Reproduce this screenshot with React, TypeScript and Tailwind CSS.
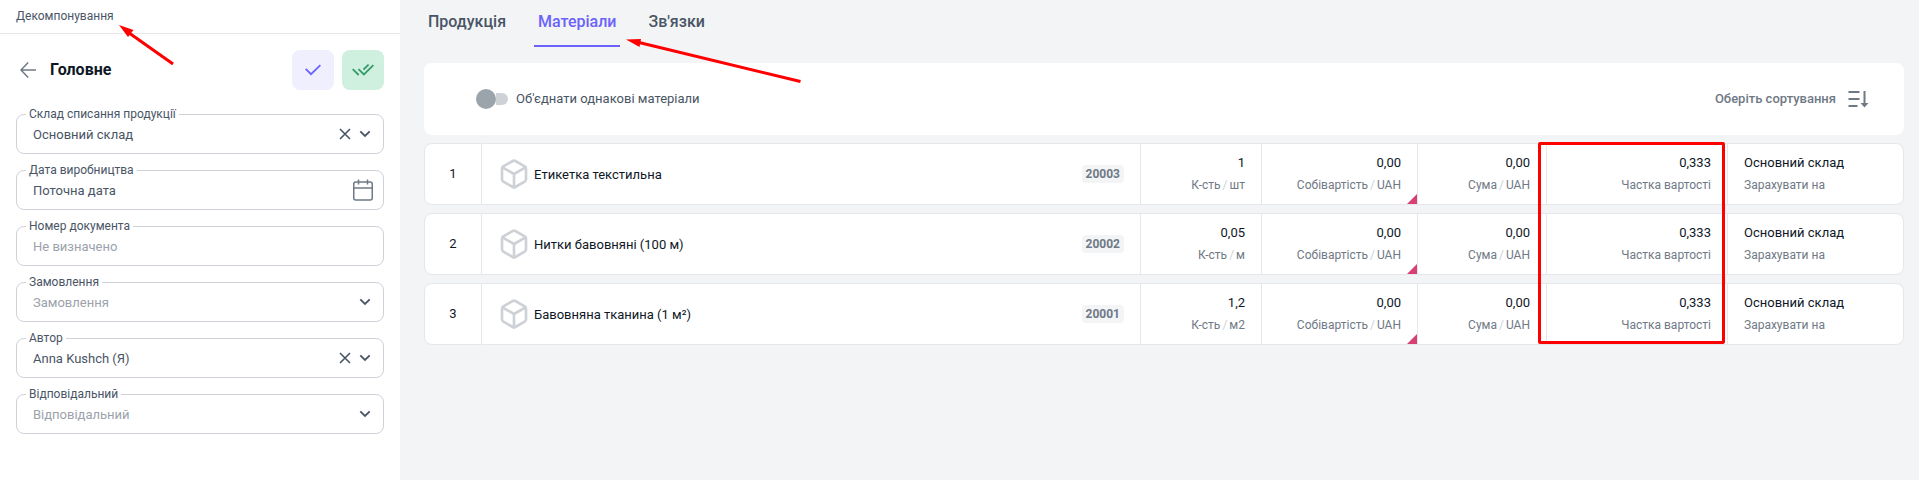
import type { ReactNode } from "react";
import { Box } from "lucide-react";
import clsx from "clsx";

interface Field {
  id: string;
  label: string;
  value?: string;
  placeholder?: string;
  kind: "select" | "date" | "text";
}

const fields: Field[] = [
  { id: "warehouse", label: "Склад списання продукції", value: "Основний склад", kind: "select" },
  { id: "date", label: "Дата виробництва", value: "Поточна дата", kind: "date" },
  { id: "number", label: "Номер документа", placeholder: "Не визначено", kind: "text" },
  { id: "order", label: "Замовлення", placeholder: "Замовлення", kind: "select" },
  { id: "author", label: "Автор", value: "Anna Kushch (Я)", kind: "select" },
  { id: "manager", label: "Відповідальний", placeholder: "Відповідальний", kind: "select" },
];

const materials = [
  { name: "Етикетка текстильна", code: "20003", qty: "1", unit: "шт" },
  { name: "Нитки бавовняні (100 м)", code: "20002", qty: "0,05", unit: "м" },
  { name: "Бавовняна тканина (1 м²)", code: "20001", qty: "1,2", unit: "м2" },
];

const tabs = ["Продукція", "Матеріали", "Зв'язки"];

function ClearIcon() {
  return (
    <svg width="12" height="12" viewBox="0 0 12 12" fill="none" stroke="currentColor" strokeWidth="1.6">
      <path d="M1 1l10 10M11 1L1 11" />
    </svg>
  );
}

function ChevronIcon() {
  return (
    <svg width="12" height="8" viewBox="0 0 12 8" fill="none" stroke="currentColor" strokeWidth="1.8">
      <path d="M1.3 1.3L6 6l4.7-4.7" />
    </svg>
  );
}

function CalendarIcon() {
  return (
    <svg width="20" height="22" viewBox="0 0 20 22" fill="none" stroke="currentColor" strokeWidth="1.5">
      <rect x="0.75" y="3" width="18.5" height="18" rx="2" />
      <path d="M1 9h18M5.5 0.5v5M14.5 0.5v5" />
    </svg>
  );
}

function FormField({ id, label, value, placeholder, kind }: Field) {
  return (
    <div className="relative flex h-10 items-center rounded-lg border border-[#ced1d8] text-[#495565]">
      <label htmlFor={id} className="absolute -top-[9px] left-[9px] bg-white px-[3px] text-xs leading-4">
        {label}
      </label>
      {kind === "select" ? (
        <select
          id={id}
          defaultValue={value ?? ""}
          className={clsx(
            "h-full w-full appearance-none rounded-lg bg-transparent px-4 pt-0.5 text-[13px] outline-none",
            !value && "text-[#9ba2ab]"
          )}
        >
          <option value={value ?? ""}>{value ?? placeholder}</option>
        </select>
      ) : (
        <input
          id={id}
          type="text"
          defaultValue={value}
          placeholder={placeholder}
          className="h-full w-full rounded-lg bg-transparent px-4 text-[13px] outline-none placeholder:text-[#9ba2ab]"
        />
      )}
      <div className="pointer-events-none absolute inset-y-0 right-3 flex items-center gap-2">
        {kind === "select" && value && (
          <button type="button" aria-label="Очистити" className="pointer-events-auto">
            <ClearIcon />
          </button>
        )}
        {kind === "select" && <ChevronIcon />}
      </div>
      {kind === "date" && (
        <button type="button" aria-label="Календар" className="absolute right-[10px] text-[#6f7985]">
          <CalendarIcon />
        </button>
      )}
    </div>
  );
}

function Sidebar() {
  return (
    <aside className="relative w-[400px] shrink-0 bg-white">
      <div className="flex h-[34px] items-center border-b border-[#e5e7ea] px-4 pb-px text-xs text-[#495565]">
        Декомпонування
      </div>
      <div className="flex items-center px-4 pt-4">
        <button type="button" aria-label="Назад" className="mx-1 text-[#6f7985]">
          <svg width="16" height="16" viewBox="0 0 16 16" fill="none" stroke="currentColor" strokeWidth="1.5">
            <path d="M8.2 0.6L1 8l7.2 7.4M1 8h15" />
          </svg>
        </button>
        <h1 className="ml-[10px] flex-1 text-base font-bold text-[#0e1726]">Головне</h1>
        <div className="flex gap-2">
          <button
            type="button"
            aria-label="Зберегти"
            className="flex h-10 w-[42px] items-center justify-center rounded-lg bg-[#f0effe] text-[#6b62fb]"
          >
            <svg width="16" height="12" viewBox="0 0 16 12" fill="none" stroke="currentColor" strokeWidth="1.8">
              <path d="M0.7 4.8L6 10.2l9.4-9.1" />
            </svg>
          </button>
          <button
            type="button"
            aria-label="Провести"
            className="flex h-10 w-[42px] items-center justify-center rounded-lg bg-[#cff0df] text-[#35996a]"
          >
            <svg width="22" height="12" viewBox="0 0 22 12" fill="none" stroke="currentColor" strokeWidth="1.8">
              <path d="M0.7 5.2l6 5.8M6.5 5.2l5.4 5.2 9.5-9.3M11.4 5.6L16.6 0.6" />
            </svg>
          </button>
        </div>
      </div>
      <form className="flex flex-col gap-4 px-4 pt-6">
        {fields.map((field) => (
          <FormField key={field.id} {...field} />
        ))}
      </form>
      <svg className="absolute left-[118px] top-6" width="58" height="42" viewBox="0 0 58 42">
        <path d="M9 7.5L55 40" stroke="#fe0000" strokeWidth="3" />
        <path d="M1 1l14.5 5L10 13z" fill="#fe0000" />
      </svg>
    </aside>
  );
}

interface CellProps {
  value: string;
  caption: string;
  unit?: string;
  className?: string;
  children?: ReactNode;
}

function Cell({ value, caption, unit, className, children }: CellProps) {
  return (
    <td className={clsx("relative border-y border-r border-[#e5e7ea] bg-white px-4", className)}>
      <div className="text-[13px] leading-[22px] text-[#0e1726]">{value}</div>
      <div className="text-xs leading-[22px] text-[#6f7985]">
        {caption}
        {unit && <span className="mx-0.5 text-[#ced1d8]">/</span>}
        {unit}
      </div>
      {children}
    </td>
  );
}

function MaterialsTable() {
  return (
    <div className="relative">
      <table className="w-full table-fixed border-separate border-spacing-x-0 border-spacing-y-2">
        <colgroup>
          <col className="w-[58px]" />
          <col />
          <col className="w-[121px]" />
          <col className="w-[156px]" />
          <col className="w-[129px]" />
          <col className="w-[181px]" />
          <col className="w-[176px]" />
        </colgroup>
        <tbody>
          {materials.map((item, index) => (
            <tr key={item.code} className="h-[62px]">
              <td className="rounded-l-lg border border-[#e5e7ea] bg-white text-center text-[13px] text-[#0e1726]">
                {index + 1}
              </td>
              <td className="border-y border-r border-[#e5e7ea] bg-white px-4">
                <div className="flex items-center gap-1">
                  <Box size={32} strokeWidth={2} className="text-[#ced1d6]" />
                  <span className="flex-1 pt-0.5 text-[13px] text-[#0e1726]">{item.name}</span>
                  <span className="rounded bg-[#f2f4f6] px-1 text-xs leading-[18px] font-bold text-[#6f7985]">
                    {item.code}
                  </span>
                </div>
              </td>
              <Cell value={item.qty} caption="К-сть" unit={item.unit} className="text-right" />
              <Cell value="0,00" caption="Собівартість" unit="UAH" className="text-right">
                <span className="absolute right-0 bottom-0 size-[10px] bg-[#d83f73] [clip-path:polygon(100%_0,100%_100%,0_100%)]" />
              </Cell>
              <Cell value="0,00" caption="Сума" unit="UAH" className="text-right" />
              <Cell value="0,333" caption="Частка вартості" className="text-right" />
              <Cell value="Основний склад" caption="Зарахувати на" className="rounded-r-lg text-left" />
            </tr>
          ))}
        </tbody>
      </table>
      <div className="pointer-events-none absolute top-[7px] right-[179px] h-[202px] w-[187px] rounded-xs border-3 border-[#fe0000]" />
    </div>
  );
}

export default function App() {
  return (
    <div className="flex min-h-screen bg-[#f2f4f6] font-[Roboto,sans-serif]">
      <Sidebar />
      <main className="relative min-w-0 flex-1 pr-[15px] pl-6">
        <nav className="flex h-[47px] gap-6">
          {tabs.map((tab) => (
            <button
              key={tab}
              type="button"
              className={clsx(
                "border-b-2 px-1 pb-0.5 text-base font-medium",
                tab === "Матеріали" ? "border-[#6b62fb] text-[#6b62fb]" : "border-transparent text-[#495565]"
              )}
            >
              {tab}
            </button>
          ))}
        </nav>
        <div className="mt-4 flex h-[72px] items-center justify-between rounded-lg bg-white pr-[35px] pl-[52px]">
          <label className="flex items-center gap-2 text-[13px] text-[#495565]">
            <input type="checkbox" role="switch" className="peer sr-only" />
            <span className="flex h-5 w-8 items-center">
              <span className="size-5 shrink-0 rounded-full bg-[#9ba3ab]" />
              <span className="h-3 w-3 rounded-r-full bg-[#ced1d6]" />
            </span>
            Об'єднати однакові матеріали
          </label>
          <button type="button" className="flex items-center gap-3 text-[13px] font-medium text-[#6f7985]">
            Оберіть сортування
            <svg width="21" height="18" viewBox="0 0 21 18" fill="none" stroke="currentColor" strokeWidth="2">
              <path d="M0.5 2h11M0.5 9h11M0.5 16h9M16.5 1v14" />
              <path d="M12.5 13h8l-4 4.5z" fill="currentColor" stroke="none" />
            </svg>
          </button>
        </div>
        <MaterialsTable />
        <svg className="absolute top-[38px] left-[225px]" width="178" height="46" viewBox="0 0 178 46">
          <path d="M12 4L175.500 43.500" stroke="#fe0000" strokeWidth="3" />
          <path d="M1 1.500l15-0.500-1.500 8z" fill="#fe0000" />
        </svg>
      </main>
    </div>
  );
}
